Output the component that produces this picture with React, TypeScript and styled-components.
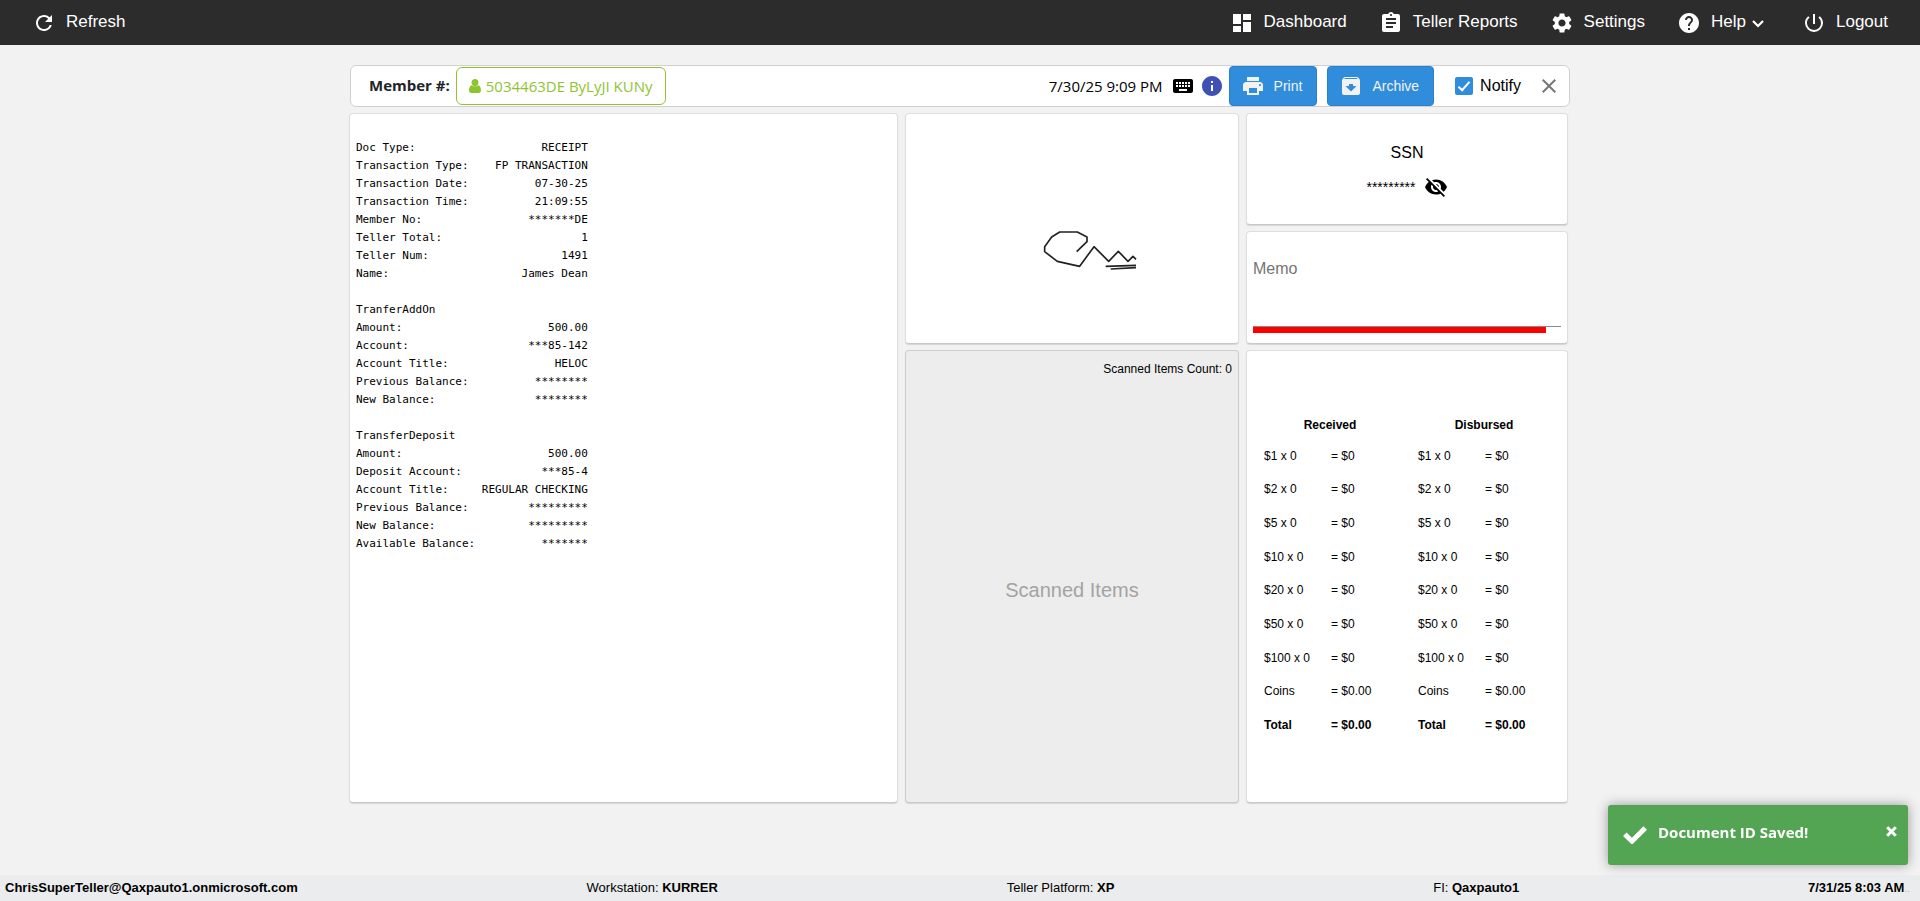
import React from "react";
import styled, { createGlobalStyle } from "styled-components";
import {
  MdRefresh,
  MdDashboard,
  MdAssignment,
  MdSettings,
  MdHelp,
  MdPowerSettingsNew,
  MdKeyboard,
  MdInfo,
  MdPrint,
  MdArchive,
  MdVisibilityOff,
  MdClose,
} from "react-icons/md";

const sans = `"Liberation Sans", Arial, sans-serif`;
const humanist = `"Segoe UI", "Open Sans", sans-serif`;

const GlobalStyle = createGlobalStyle`
  *, *::before, *::after { box-sizing: border-box; }
  body {
    margin: 0;
    background: #f2f2f2;
    color: #000;
    font-family: ${sans};
    font-size: 16px;
  }
  button, input, textarea { font: inherit; color: inherit; }
`;

const Page = styled.div`
  min-height: 100vh;
  display: flex;
  flex-direction: column;
`;

const TopBar = styled.header`
  display: flex;
  justify-content: space-between;
  height: 45px;
  padding: 0 16px;
  background: #2c2c2c;
  color: #fff;
`;

const Nav = styled.nav`
  display: flex;
`;

const NavButton = styled.button`
  display: flex;
  align-items: center;
  gap: 10px;
  padding: 0 16px;
  border: 0;
  background: none;
  color: #fff;
  font-size: 17px;
  line-height: 20px;
  cursor: pointer;
`;

const NavLabel = styled.span`
  display: flex;
  align-items: center;
  gap: 6px;
  padding-bottom: 2px;
`;

const Main = styled.main`
  flex: 1;
  width: 100%;
  max-width: 1222px;
  margin: 0 auto;
  padding-top: 20px;
`;

const Toolbar = styled.section`
  display: flex;
  align-items: center;
  justify-content: space-between;
  height: 42px;
  margin: 0 1px;
  padding: 0 8px 0 18px;
  border: 1px solid #d0d0d0;
  border-radius: 6px;
  background: #fff;
`;

const ToolGroup = styled.div<{ $gap: number }>`
  display: flex;
  align-items: center;
  gap: ${(p) => p.$gap}px;
`;

const MemberLabel = styled.span`
  padding-bottom: 2px;
  color: #212529;
  font-family: ${humanist};
  font-size: 15px;
  font-weight: 700;
`;

const MemberButton = styled.button`
  display: flex;
  align-items: center;
  gap: 5px;
  height: 38px;
  padding: 0 12px;
  border: 1px solid #8fc431;
  border-radius: 6px;
  background: #fff;
  color: #8fc431;
  font-family: ${humanist};
  font-size: 15px;
  white-space: nowrap;
  cursor: pointer;
`;

const Timestamp = styled.time`
  margin-right: 3px;
  font-family: ${humanist};
  font-size: 15px;
  white-space: nowrap;
`;

const IconButton = styled.button<{ $color: string }>`
  display: flex;
  padding: 0;
  border: 0;
  background: none;
  color: ${(p) => p.$color};
  cursor: pointer;
`;

const ActionButton = styled.button`
  display: flex;
  align-items: center;
  gap: 9px;
  height: 40px;
  padding: 0 14px 0 11px;
  border: 1px solid #2a80ca;
  border-radius: 4px;
  background: #308ddb;
  color: #f2f2f2;
  font-size: 14px;
  cursor: pointer;
`;

const NotifyLabel = styled.label`
  display: flex;
  align-items: center;
  gap: 7px;
  margin: 0 6px 0 11px;
`;

const CheckBox = styled.input`
  appearance: none;
  width: 18px;
  height: 18px;
  margin: 0;
  border-radius: 2px;
  background: #308ddb;
  display: grid;
  place-items: center;
  &:checked::after {
    content: "";
    width: 6px;
    height: 12px;
    margin-bottom: 3px;
    border: solid #fff;
    border-width: 0 2px 2px 0;
    transform: rotate(42deg);
  }
`;

const Board = styled.div`
  display: grid;
  grid-template-columns: 549fr 334fr 322fr;
  grid-template-rows: 112px 113px 453px;
  column-gap: 7px;
  row-gap: 6px;
  padding: 6px 3px 0 0;
`;

const Card = styled.section<{ $rows?: number; $muted?: boolean }>`
  grid-row: span ${(p) => p.$rows ?? 1};
  display: flex;
  flex-direction: column;
  min-width: 0;
  padding: 6px;
  border: 1px solid ${(p) => (p.$muted ? "#cdcdcd" : "#dedede")};
  border-bottom-color: #c8c8c8;
  border-radius: 4px;
  box-shadow: 0 1px 1px rgba(0, 0, 0, 0.12);
  background: ${(p) => (p.$muted ? "#ededed" : "#fff")};
`;

const Receipt = styled.pre`
  margin: 19px 0 0;
  font-family: "DejaVu Sans Mono", monospace;
  font-size: 11px;
  line-height: 18px;
`;

const Signature = styled.svg`
  margin: auto;
`;

const ScannedCount = styled.div`
  padding-top: 4px;
  text-align: right;
  font-size: 12px;
  line-height: 16px;
`;

const ScannedEmpty = styled.div`
  flex: 1;
  display: flex;
  align-items: center;
  justify-content: center;
  padding-top: 8px;
  color: #a3a3a3;
  font-size: 20px;
`;

const SsnBlock = styled.div`
  display: flex;
  flex-direction: column;
  align-items: center;
  gap: 11px;
  padding-top: 22px;
  line-height: 22px;
`;

const SsnValue = styled.div`
  display: flex;
  align-items: center;
  gap: 8px;
  font-size: 14px;
`;

const MemoField = styled.textarea`
  display: block;
  width: 100%;
  height: 85px;
  margin-top: 4px;
  padding: 15px 0 0;
  border: 0;
  border-bottom: 1px solid #8a8a8a;
  outline: 0;
  resize: none;
  line-height: 24px;
  &::placeholder { color: #757575; opacity: 1; }
`;

const MemoMeter = styled.div`
  width: 95%;
  height: 6px;
  background: #f00;
`;

const CashTable = styled.table`
  width: 100%;
  height: 331px;
  margin: auto 0;
  border-collapse: collapse;
  table-layout: fixed;
  font-size: 12px;
  line-height: 16px;
  th { height: 28px; padding: 0; }
  td { padding: 0 0 0 11px; white-space: nowrap; }
`;

const DenomCol = styled.col`
  width: 67px;
`;

const CashRow = styled.tr<{ $total: boolean }>`
  font-weight: ${(p) => (p.$total ? 700 : 400)};
`;

const Footer = styled.footer`
  display: flex;
  align-items: center;
  justify-content: space-between;
  height: 26px;
  padding: 0 10px 2px 5px;
  background: #ebecee;
  font-size: 13px;
  white-space: nowrap;
`;

const Institution = styled.span`
  padding-left: 30px;
`;

const Faint = styled.span`
  color: #b4b4b4;
  font-size: 10px;
  font-weight: 400;
`;

const Toast = styled.div`
  position: fixed;
  right: 12px;
  bottom: 36px;
  display: flex;
  align-items: flex-start;
  width: 300px;
  height: 60px;
  padding: 16px 11px 0 15px;
  border-radius: 3px;
  background: #53a453;
  box-shadow: 0 0 12px #999;
  color: #fff;
`;

const ToastText = styled.strong`
  flex: 1;
  padding-left: 11px;
  font-family: ${humanist};
  font-size: 15px;
  line-height: 22px;
`;

const ToastIcon = styled.svg`
  margin-top: 5px;
`;

const ToastClose = styled.button`
  display: flex;
  margin-top: 5px;
  padding: 0;
  border: 0;
  background: none;
  color: #fff;
  cursor: pointer;
`;

const receipt: ([string, string] | [string] | [])[] = [
  ["Doc Type:", "RECEIPT"],
  ["Transaction Type:", "FP TRANSACTION"],
  ["Transaction Date:", "07-30-25"],
  ["Transaction Time:", "21:09:55"],
  ["Member No:", "*******DE"],
  ["Teller Total:", "1"],
  ["Teller Num:", "1491"],
  ["Name:", "James Dean"],
  [],
  ["TranferAddOn"],
  ["Amount:", "500.00"],
  ["Account:", "***85-142"],
  ["Account Title:", "HELOC"],
  ["Previous Balance:", "********"],
  ["New Balance:", "********"],
  [],
  ["TransferDeposit"],
  ["Amount:", "500.00"],
  ["Deposit Account:", "***85-4"],
  ["Account Title:", "REGULAR CHECKING"],
  ["Previous Balance:", "*********"],
  ["New Balance:", "*********"],
  ["Available Balance:", "*******"],
];

const RECEIPT_WIDTH = 35;

const receiptText = receipt
  .map(([label = "", value]) =>
    value ? label + value.padStart(RECEIPT_WIDTH - label.length) : label
  )
  .join("\n");

const cash: [string, string][] = [
  ["$1 x 0", "$0"],
  ["$2 x 0", "$0"],
  ["$5 x 0", "$0"],
  ["$10 x 0", "$0"],
  ["$20 x 0", "$0"],
  ["$50 x 0", "$0"],
  ["$100 x 0", "$0"],
  ["Coins", "$0.00"],
  ["Total", "$0.00"],
];

const UserIcon = () => (
  <svg width="12" height="14" viewBox="0 0 12 14" fill="currentColor" aria-hidden="true">
    <path d="M6 0a3.5 3.6 0 0 1 3.500 3.600C9.500 5.800 8 7.500 6 7.500S2.500 5.800 2.500 3.600A3.500 3.600 0 0 1 6 0zM2.900 6.300C.8 6.500 0 8.800 0 11.200 0 12.800 1 14 2.500 14h7c1.500 0 2.500-1.200 2.500-2.800 0-2.400-.8-4.700-2.900-4.900C8.300 7.300 7.200 7.500 6 7.500S3.700 7.300 2.900 6.300z" />
  </svg>
);

const ChevronIcon = () => (
  <svg width="18" height="18" viewBox="0 0 18 18" fill="none" stroke="currentColor" strokeWidth="2.2" aria-hidden="true">
    <path d="M1 8l5 5 5-5" />
  </svg>
);

export default function App() {
  return (
    <Page>
      <GlobalStyle />
      <TopBar>
        <NavButton type="button">
          <MdRefresh size={24} />
          <NavLabel>Refresh</NavLabel>
        </NavButton>
        <Nav>
          <NavButton type="button">
            <MdDashboard size={24} />
            <NavLabel>Dashboard</NavLabel>
          </NavButton>
          <NavButton type="button">
            <MdAssignment size={24} />
            <NavLabel>Teller Reports</NavLabel>
          </NavButton>
          <NavButton type="button">
            <MdSettings size={24} />
            <NavLabel>Settings</NavLabel>
          </NavButton>
          <NavButton type="button">
            <MdHelp size={24} />
            <NavLabel>
              Help
              <ChevronIcon />
            </NavLabel>
          </NavButton>
          <NavButton type="button">
            <MdPowerSettingsNew size={24} />
            <NavLabel>Logout</NavLabel>
          </NavButton>
        </Nav>
      </TopBar>

      <Main>
        <Toolbar>
          <ToolGroup $gap={6}>
            <MemberLabel>Member #:</MemberLabel>
            <MemberButton type="button">
              <UserIcon />
              5034463DE ByLyJI KUNy
            </MemberButton>
          </ToolGroup>
          <ToolGroup $gap={10}>
            <ToolGroup $gap={5}>
              <Timestamp>7/30/25 9:09 PM</Timestamp>
              <IconButton type="button" $color="#000" aria-label="Keyboard">
                <MdKeyboard size={24} />
              </IconButton>
              <IconButton type="button" $color="#3f51b5" aria-label="Information">
                <MdInfo size={24} />
              </IconButton>
              <ActionButton type="button">
                <MdPrint size={24} />
                Print
              </ActionButton>
            </ToolGroup>
            <ActionButton type="button">
              <MdArchive size={24} />
              Archive
            </ActionButton>
            <NotifyLabel>
              <CheckBox type="checkbox" defaultChecked />
              Notify
            </NotifyLabel>
            <IconButton type="button" $color="#777" aria-label="Close">
              <MdClose size={24} />
            </IconButton>
          </ToolGroup>
        </Toolbar>

        <Board>
          <Card $rows={3}>
            <Receipt>{receiptText}</Receipt>
          </Card>
          <Card $rows={2}>
            <Signature
              width="200"
              height="100"
              viewBox="248 -64 600 300"
              fill="none"
              stroke="#222"
              strokeWidth="5"
              strokeLinejoin="round"
              role="img"
              aria-label="Signature"
            >
              <path d="M562 154L593 124V110L564 95H511L487 110L466 139V154L504 183L571 198L614 139L658 183L687 153L716 183L731 168L740 177" />
              <path d="M649 198L740 195M664 206L740 202" />
            </Signature>
          </Card>
          <Card>
            <SsnBlock>
              <div>SSN</div>
              <SsnValue>
                *********
                <IconButton type="button" $color="#000" aria-label="Show SSN">
                  <MdVisibilityOff size={24} />
                </IconButton>
              </SsnValue>
            </SsnBlock>
          </Card>
          <Card>
            <MemoField placeholder="Memo" aria-label="Memo" />
            <MemoMeter />
          </Card>
          <Card $muted>
            <ScannedCount>Scanned Items Count: 0</ScannedCount>
            <ScannedEmpty>Scanned Items</ScannedEmpty>
          </Card>
          <Card>
            <CashTable>
              <colgroup>
                <DenomCol />
                <col />
                <DenomCol />
                <col />
              </colgroup>
              <thead>
                <tr>
                  <th colSpan={2}>Received</th>
                  <th colSpan={2}>Disbursed</th>
                </tr>
              </thead>
              <tbody>
                {cash.map(([label, amount]) => (
                  <CashRow key={label} $total={label === "Total"}>
                    <td>{label}</td>
                    <td>= {amount}</td>
                    <td>{label}</td>
                    <td>= {amount}</td>
                  </CashRow>
                ))}
              </tbody>
            </CashTable>
          </Card>
        </Board>
      </Main>

      <Footer>
        <b>ChrisSuperTeller@Qaxpauto1.onmicrosoft.com</b>
        <span>
          Workstation: <b>KURRER</b>
        </span>
        <span>
          Teller Platform: <b>XP</b>
        </span>
        <Institution>
          FI: <b>Qaxpauto1</b>
        </Institution>
        <b>
          7/31/25 8:03 AM<Faint>..</Faint>
        </b>
      </Footer>

      <Toast role="status">
        <ToastIcon width="24" height="18" viewBox="0 0 24 18" fill="none" stroke="#fff" strokeWidth="5" aria-hidden="true">
          <path d="M1.800 8.300L9 15.200L22.200 2" />
        </ToastIcon>
        <ToastText>Document ID Saved!</ToastText>
        <ToastClose type="button" aria-label="Dismiss">
          <svg width="11" height="11" viewBox="0 0 11 11" stroke="currentColor" strokeWidth="3" aria-hidden="true">
            <path d="M1.200 1.200l8.600 8.600M9.800 1.200L1.200 9.800" />
          </svg>
        </ToastClose>
      </Toast>
    </Page>
  );
}
